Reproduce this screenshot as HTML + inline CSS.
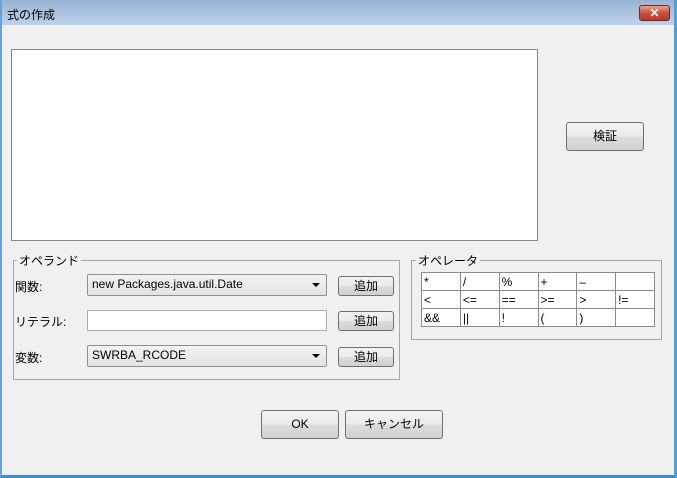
<!DOCTYPE html>
<html><head><meta charset="utf-8"><style>
*{box-sizing:border-box;margin:0;padding:0}
body{width:677px;height:478px;overflow:hidden;background:#f0f0f0;font-family:"Liberation Sans","Noto Sans CJK JP",sans-serif;font-size:12px;color:#000;position:relative}
.a{position:absolute}
.frame{left:0;top:0;width:677px;height:478px;border-left:2px solid #6e9fd2;border-right:3px solid #4aa3d8;border-bottom:3px solid #3a8fc8;}
.title{left:0;top:0;width:677px;height:25px;background:linear-gradient(#98b3d2,#bcd2eb);}
.btn{border:1px solid #707070;border-radius:3px;background:linear-gradient(#f2f2f2 0%,#ebebeb 50%,#dddddd 51%,#cfcfcf 100%);text-align:center;font-size:12px}
.white{background:#fff;border:1px solid #828790}
.grp{border:1px solid #a8a8a8}
.lbl{background:#f0f0f0;padding:0 2px}
table{border-collapse:collapse;background:#fff}
td{border:1px solid #8c8c8c;width:39px;height:18px;font-size:12px;padding-left:2px;line-height:16px}
.combo{border:1px solid #8e8f8f;border-radius:2px;background:linear-gradient(#f3f3f3,#e3e3e3);padding-left:4px;line-height:19px}
.arr{position:absolute;right:6px;top:8px;width:0;height:0;border-left:4px solid transparent;border-right:4px solid transparent;border-top:4px solid #000}
</style></head><body>
<div class="a title"></div>
<div class="a" style="left:7px;top:6px;font-size:12px">式の作成</div>
<div class="a" style="left:639px;top:5px;width:31px;height:16px;border:1px solid #6b2a22;border-radius:3px;background:linear-gradient(#e8a393,#c9503c 50%,#b83a28);color:#fff;font-weight:bold;text-align:center;line-height:14px;font-size:12px">✕</div>
<div class="a frame"></div>
<div class="a white" style="left:11px;top:49px;width:527px;height:192px"></div>
<div class="a btn" style="left:566px;top:122px;width:78px;height:29px;line-height:27px">検証</div>

<div class="a grp" style="left:13px;top:260px;width:387px;height:120px"></div>
<div class="a lbl" style="left:17px;top:252px">オペランド</div>
<div class="a" style="left:15px;top:278px">関数:</div>
<div class="a combo" style="left:87px;top:274px;width:240px;height:22px">new Packages.java.util.Date<span class="arr"></span></div>
<div class="a btn" style="left:338px;top:276px;width:56px;height:20px;line-height:18px">追加</div>
<div class="a" style="left:15px;top:313px">リテラル:</div>
<div class="a white" style="left:87px;top:310px;width:240px;height:21px;border-color:#abadb3"></div>
<div class="a btn" style="left:338px;top:311px;width:56px;height:20px;line-height:18px">追加</div>
<div class="a" style="left:15px;top:349px">変数:</div>
<div class="a combo" style="left:87px;top:345px;width:240px;height:22px">SWRBA_RCODE<span class="arr"></span></div>
<div class="a btn" style="left:338px;top:347px;width:56px;height:20px;line-height:18px">追加</div>

<div class="a grp" style="left:411px;top:260px;width:251px;height:80px"></div>
<div class="a lbl" style="left:416px;top:252px">オペレータ</div>
<table class="a" style="left:421px;top:272px;width:234px">
<tr><td>*</td><td>/</td><td>%</td><td>+</td><td>–</td><td></td></tr>
<tr><td>&lt;</td><td>&lt;=</td><td>==</td><td>&gt;=</td><td>&gt;</td><td>!=</td></tr>
<tr><td>&amp;&amp;</td><td>||</td><td>!</td><td>(</td><td>)</td><td></td></tr>
</table>

<div class="a btn" style="left:261px;top:410px;width:78px;height:29px;line-height:27px">OK</div>
<div class="a btn" style="left:345px;top:410px;width:98px;height:29px;line-height:27px">キャンセル</div>
</body></html>
